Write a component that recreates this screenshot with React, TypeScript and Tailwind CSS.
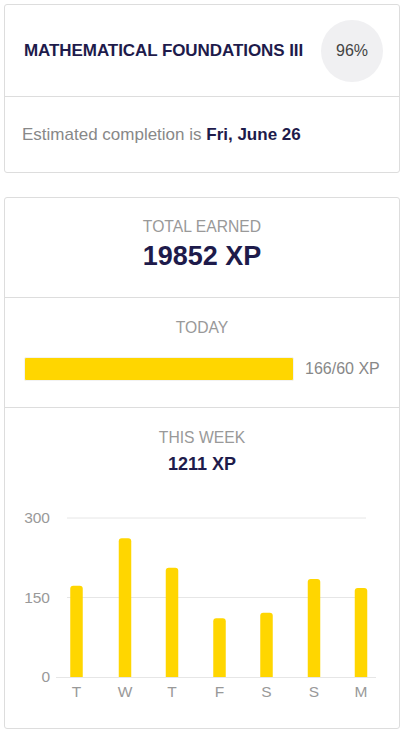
import React from 'react'

const days = [
  { label: 'T', value: 172, x: 76.5 },
  { label: 'W', value: 262, x: 125 },
  { label: 'T', value: 206, x: 172 },
  { label: 'F', value: 111, x: 219.5 },
  { label: 'S', value: 121, x: 266.5 },
  { label: 'S', value: 185, x: 314 },
  { label: 'M', value: 168, x: 361 },
]

// chart coordinates are in page px, offset by the svg origin
const OX = 5
const OY = 500
const BASE = 677
const TOP = 518
const scale = (BASE - TOP) / 300

const barPath = (cx: number, value: number) => {
  const w = 12.5
  const r = 3
  const x = cx - w / 2 - OX
  const y = BASE - value * scale - OY
  const b = BASE - OY
  return `M${x},${b} L${x},${y + r} Q${x},${y} ${x + r},${y} L${x + w - r},${y} Q${x + w},${y} ${x + w},${y + r} L${x + w},${b} Z`
}

const WeekChart = () => (
  <svg width="394" height="222" className="block" style={{ fontFamily: '"Liberation Sans", Arial, sans-serif' }}>
    {[300, 150].map((v) => (
      <line
        key={v}
        x1={67 - OX}
        x2={366 - OX}
        y1={BASE - v * scale - OY}
        y2={BASE - v * scale - OY}
        stroke="#e6e6e6"
        strokeWidth="1"
      />
    ))}
    <line x1={56 - OX} x2={376 - OX} y1={BASE - OY + 0.5} y2={BASE - OY + 0.5} stroke="#e6e6e6" strokeWidth="1" />
    {[300, 150, 0].map((v) => (
      <text
        key={v}
        x={50 - OX}
        y={BASE - v * scale - OY + 5}
        textAnchor="end"
        fontSize="15.5"
        fill="#999999"
      >
        {v}
      </text>
    ))}
    {days.map((d, i) => (
      <g key={i}>
        <path d={barPath(d.x, d.value)} fill="#ffd600" />
        <text x={d.x - OX} y={697 - OY} textAnchor="middle" fontSize="15.5" fill="#999999">
          {d.label}
        </text>
      </g>
    ))}
  </svg>
)

const App = () => {
  return (
    <div className="w-[404px] h-[734px] bg-white px-1 pt-1 font-['Liberation_Sans',Arial,sans-serif]">
      {/* Course card */}
      <div className="border border-[#dddddd] rounded-[3px]">
        <div className="h-[92px] flex items-center justify-between pl-[19px] pr-4 border-b border-[#dddddd]">
          <div className="text-[17px] font-bold text-[#1e1b4b] tracking-[-0.07px]">MATHEMATICAL FOUNDATIONS III</div>
          <div className="w-[62px] h-[62px] rounded-full bg-[#f0f0f2] flex items-center justify-center text-[16px] text-[#444444]">
            96%
          </div>
        </div>
        <div className="h-[75px] flex items-center pl-[17px] text-[17px] text-[#888888]">
          Estimated completion is&nbsp;<span className="font-bold text-[#1e1b4b]">Fri, June 26</span>
        </div>
      </div>

      {/* XP card */}
      <div className="mt-6 border border-[#dddddd] rounded-[3px] h-[532px] flex flex-col">
        <div className="h-[100px] flex flex-col items-center border-b border-[#dddddd] pt-[20px]">
          <div className="text-[15.7px] leading-[18px] text-[#999999]">TOTAL EARNED</div>
          <div className="mt-[4px] text-[27px] leading-[32px] font-bold text-[#1e1b4b]">19852 XP</div>
        </div>
        <div className="h-[110px] flex flex-col border-b border-[#dddddd] pt-[21px]">
          <div className="text-center text-[15.7px] leading-[18px] text-[#999999]">TODAY</div>
          <div className="mt-[20px] flex items-center pl-[19px]">
            <div className="w-[270px] h-6 bg-[#ffd600] rounded-[2px] border border-[#f2f2f2]" />
            <div className="ml-[11px] text-[16px] text-[#888888]">166/60 XP</div>
          </div>
        </div>
        <div className="flex-1 flex flex-col pt-[21px]">
          <div className="text-center text-[15.7px] leading-[18px] text-[#999999]">THIS WEEK</div>
          <div className="mt-[7px] text-center text-[18px] leading-[20px] font-bold text-[#1e1b4b]">1211 XP</div>
          <div className="mt-[26px]">
            <WeekChart />
          </div>
        </div>
      </div>
    </div>
  )
}

export default App
